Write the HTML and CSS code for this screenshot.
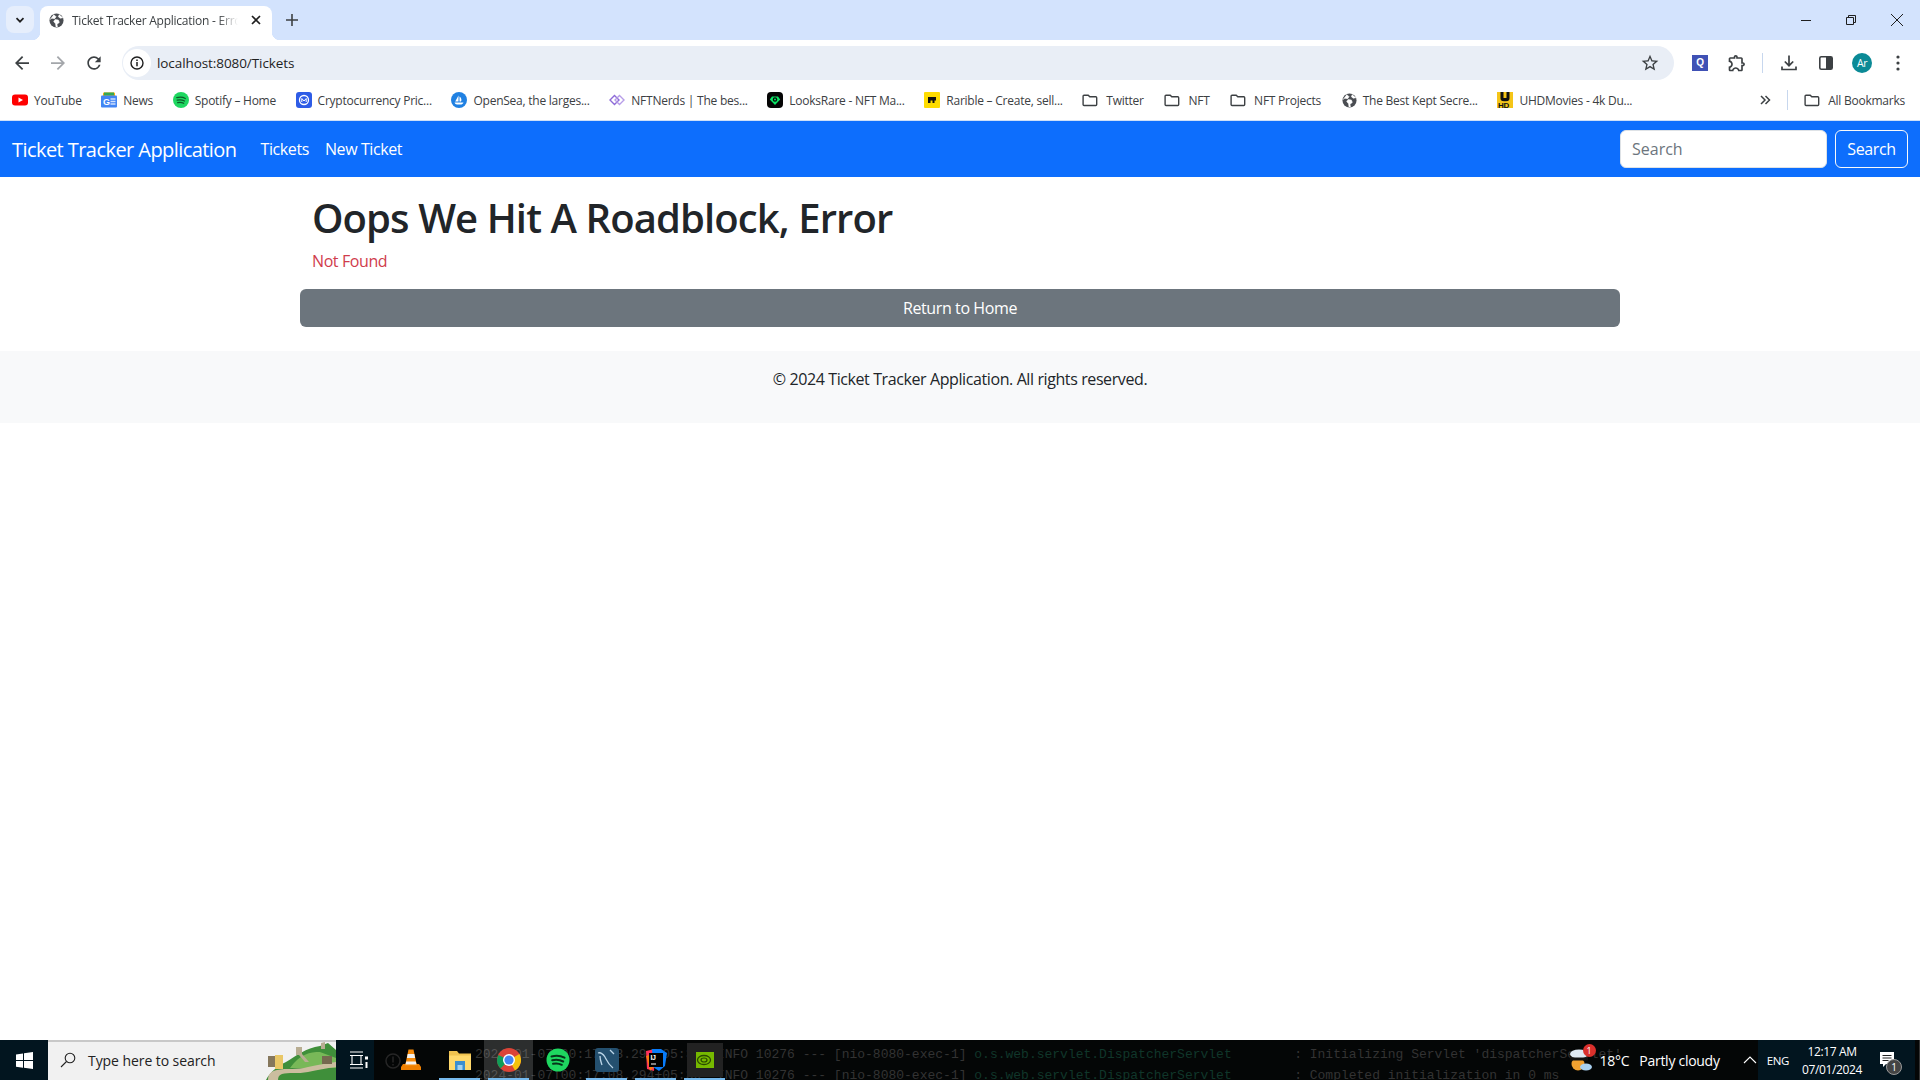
FILE: index.html
```html
<!DOCTYPE html>
<html lang="en">
<head>
    <meta charset="UTF-8">
    <title>Ticket Tracker Application - Error</title>
    <link rel="stylesheet" href="styles.css">
</head>
<body>
    <svg class="defs" width="0" height="0">
        <symbol id="globe" viewBox="0 0 16 16">
            <circle cx="8" cy="8" r="7.5" fill="#4a4d52"/>
            <path d="M5 1.5 7.5 4 6 6 3 5.5 1 7M9 15l-.5-3L11 10l-1-2.5-3.5-.5-1.5 2 2 2.5.5 3.5M11 1.5 10 4l2 1.5 3-.5" fill="#fff" stroke="#fff" stroke-width=".6"/>
        </symbol>
        <symbol id="folder" viewBox="0 0 16 16">
            <path d="M2 3.2h4.2l1.6 1.6h6a.9.9 0 0 1 .9.9v6.9a.9.9 0 0 1-.9.9H2a.9.9 0 0 1-.9-.9V4.1a.9.9 0 0 1 .9-.9z" fill="none" stroke="#3c4043" stroke-width="1.4"/>
        </symbol>
    </svg>

    <div class="tabstrip">
        <div class="tab-search">
            <svg width="12" height="12" viewBox="0 0 12 12"><path d="M2.5 4.2 6 7.7l3.5-3.5" fill="none" stroke="#1f1f1f" stroke-width="1.7"/></svg>
        </div>
        <div class="tab">
            <svg class="tab-icon" width="15" height="15"><use href="#globe"/></svg>
            <span class="tab-title">Ticket Tracker Application - Error</span>
            <svg width="12" height="12" viewBox="0 0 12 12"><path d="M2 2l8 8M10 2l-8 8" stroke="#1f1f1f" stroke-width="1.7"/></svg>
        </div>
        <svg class="new-tab" width="14" height="14" viewBox="0 0 14 14"><path d="M7 1v12M1 7h12" stroke="#3c4043" stroke-width="1.6"/></svg>
        <div class="window-controls">
            <svg width="12" height="12" viewBox="0 0 12 12"><path d="M1 6.5h10" stroke="#1f1f1f"/></svg>
            <svg width="12" height="12" viewBox="0 0 12 12"><path d="M1.5 3.5h7v7h-7zM3.5 3.5v-2h7v7h-2" fill="none" stroke="#1f1f1f"/></svg>
            <svg width="14" height="14" viewBox="0 0 14 14"><path d="M1 1l12 12M13 1 1 13" stroke="#1f1f1f"/></svg>
        </div>
    </div>

    <div class="toolbar">
        <div class="nav-buttons">
            <svg width="14" height="14" viewBox="0 0 16 16"><path d="M16 7H3.83l5.59-5.59L8 0 0 8l8 8 1.41-1.41L3.83 9H16z" fill="#3c4043"/></svg>
            <svg width="14" height="14" viewBox="0 0 16 16"><path d="M0 7h12.17L6.58 1.41 8 0l8 8-8 8-1.41-1.41L12.17 9H0z" fill="#a3a6aa"/></svg>
            <svg class="reload" width="20" height="20" viewBox="0 0 24 24"><path d="M17.65 6.35A7.958 7.958 0 0 0 12 4c-4.42 0-7.99 3.58-7.99 8s3.57 8 7.99 8c3.73 0 6.84-2.55 7.73-6h-2.08A5.99 5.99 0 0 1 12 18c-3.31 0-6-2.69-6-6s2.69-6 6-6c1.66 0 3.14.69 4.22 1.78L13 11h7V4l-2.35 2.35z" fill="#3c4043"/></svg>
        </div>
        <div class="omnibox">
            <span class="site-info">
                <svg width="14" height="14" viewBox="0 0 14 14"><circle cx="7" cy="7" r="6" fill="none" stroke="#1f1f1f" stroke-width="1.4"/><path d="M7 6v4.2M7 3.6v1.4" stroke="#1f1f1f" stroke-width="1.5"/></svg>
            </span>
            <span class="url">localhost:8080/Tickets</span>
            <svg class="star" width="20" height="20" viewBox="0 0 24 24"><path d="M22 9.24l-7.19-.62L12 2 9.19 8.63 2 9.24l5.46 4.73L5.82 21 12 17.27 18.18 21l-1.63-7.03L22 9.24zM12 15.4l-3.76 2.27 1-4.28-3.32-2.88 4.38-.38L12 6.1l1.71 4.04 4.38.38-3.32 2.88 1 4.28L12 15.4z" fill="#3c4043"/></svg>
        </div>
        <div class="toolbar-actions">
            <span class="ext-q">Q</span>
            <svg class="act-puzzle" width="20" height="20" viewBox="0 0 24 24"><path d="M10.5 4.5c.28 0 .5.22.5.5v2h6v6h2c.28 0 .5.22.5.5s-.22.5-.5.5h-2v6h-2.12c-.68-1.75-2.39-3-4.38-3s-3.7 1.25-4.38 3H4v-2.12c1.75-.68 3-2.39 3-4.38 0-1.99-1.24-3.7-2.99-4.38L4 7h6V5c0-.28.22-.5.5-.5m0-2C9.12 2.5 8 3.62 8 5H4c-1.1 0-1.99.9-1.99 2v3.8h.29c1.49 0 2.7 1.21 2.7 2.7s-1.21 2.7-2.7 2.7H2V20c0 1.1.9 2 2 2h3.8v-.3c0-1.49 1.21-2.7 2.7-2.7s2.7 1.21 2.7 2.7v.3H17c1.1 0 2-.9 2-2v-4c1.38 0 2.5-1.12 2.5-2.5S20.38 11 19 11V7c0-1.1-.9-2-2-2h-4c0-1.38-1.12-2.5-2.5-2.5z" fill="#3c4043"/></svg>
            <span class="toolbar-sep"></span>
            <svg class="act-download" width="18" height="18" viewBox="0 0 18 18"><path d="M9 1.5v10M4.8 7.5 9 11.7l4.2-4.2M2 12.5v3h14v-3" fill="none" stroke="#3c4043" stroke-width="1.7"/></svg>
            <svg class="act-panel" width="16" height="16" viewBox="0 0 16 16"><rect x="1.8" y="1.8" width="12.4" height="12.4" rx="1.5" fill="none" stroke="#3c4043" stroke-width="1.6"/><rect x="8" y="2" width="6" height="12" fill="#3c4043"/></svg>
            <span class="avatar">Ar</span>
            <svg class="act-menu" width="4" height="16" viewBox="0 0 4 16"><circle cx="2" cy="2" r="1.6" fill="#3c4043"/><circle cx="2" cy="8" r="1.6" fill="#3c4043"/><circle cx="2" cy="14" r="1.6" fill="#3c4043"/></svg>
        </div>
    </div>

    <div class="bookmarks">
        <a class="bm">
            <svg width="16" height="16" viewBox="0 0 16 16"><rect y="2.5" width="16" height="11" rx="3" fill="#f00"/><path d="M6.5 5.5v5L11 8z" fill="#fff"/></svg>
            YouTube
        </a>
        <a class="bm">
            <svg width="16" height="16" viewBox="0 0 16 16"><rect x="2" y="0.5" width="12" height="5" rx="1" fill="#f9ab00"/><rect x="3" y="0.5" width="10" height="3" fill="#34a853"/><rect y="3.5" width="16" height="12" rx="1" fill="#4285f4"/><path d="M9.5 7h5M9.5 9.5h5M9.5 12h5" stroke="#cfe0fc" stroke-width="1.3"/><text x="2" y="12.5" class="svg-g">G</text></svg>
            News
        </a>
        <a class="bm">
            <svg width="16" height="16" viewBox="0 0 16 16"><circle cx="8" cy="8" r="8" fill="#1ed760"/><path d="M3.8 5.7c3-.8 6-.6 8.5.8M4.2 8.2c2.6-.6 5-.4 7.3.8M4.7 10.6c2.1-.5 4.2-.3 6 .7" fill="none" stroke="#0d5a2a" stroke-width="1.3" stroke-linecap="round"/></svg>
            Spotify – Home
        </a>
        <a class="bm">
            <svg width="16" height="16" viewBox="0 0 16 16"><rect width="16" height="16" rx="3" fill="#2e5ce6"/><circle cx="8" cy="8" r="4.5" fill="none" stroke="#fff" stroke-width="1.3"/><path d="M5.8 10V6.5L8 9l2.2-2.5V10" fill="none" stroke="#fff"/></svg>
            Cryptocurrency Pric...
        </a>
        <a class="bm">
            <svg width="16" height="16" viewBox="0 0 16 16"><circle cx="8" cy="8" r="8" fill="#2081e2"/><path d="M7.5 3.5v6H4.2zM8.5 4.5c1.8 1.2 2.5 3.5 1.5 5H8.5zM3.5 10.5h9c-.6 1.5-1.8 2-2.8 2H6c-1.2 0-2-.8-2.5-2z" fill="#fff"/></svg>
            OpenSea, the larges...
        </a>
        <a class="bm">
            <svg width="16" height="16" viewBox="0 0 16 16"><path d="M1 8l4.5-4.5L10 8l-4.5 4.5z" fill="none" stroke="#8d6bd8" stroke-width="1.4"/><path d="M6 8l4.5-4.5L15 8l-4.5 4.5z" fill="none" stroke="#b79de8" stroke-width="1.4"/></svg>
            NFTNerds | The bes...
        </a>
        <a class="bm">
            <svg width="16" height="16" viewBox="0 0 16 16"><rect width="16" height="16" rx="4" fill="#050505"/><path d="M8 13 2.8 7.5 5 4.5h6l2.2 3z" fill="#0ce466"/><circle cx="8" cy="7.5" r="2.2" fill="#050505"/><circle cx="8" cy="7.5" r="1" fill="#0ce466"/></svg>
            LooksRare - NFT Ma...
        </a>
        <a class="bm">
            <svg width="16" height="16" viewBox="0 0 16 16"><rect width="16" height="16" rx="1" fill="#fedc00"/><path d="M4 5h8v3.5h-1.5V11H8.5V8.5h-2V11H4z" fill="#111"/></svg>
            Rarible – Create, sell...
        </a>
        <a class="bm bm-folder"><svg width="16" height="16"><use href="#folder"/></svg>Twitter</a>
        <a class="bm bm-folder"><svg width="16" height="16"><use href="#folder"/></svg>NFT</a>
        <a class="bm bm-folder"><svg width="16" height="16"><use href="#folder"/></svg>NFT Projects</a>
        <a class="bm"><svg width="15" height="15"><use href="#globe"/></svg>The Best Kept Secre...</a>
        <a class="bm">
            <svg width="16" height="16" viewBox="0 0 16 16"><rect width="16" height="16" fill="#f5c518"/><path d="M3.5 0v6.5a4.5 3 0 0 0 9 0V0h-3v6H6.5V0z" fill="#111"/><rect y="9.5" width="16" height="6.5" fill="#f5c518"/><text x="1" y="15.5" class="svg-hd">HD</text></svg>
            UHDMovies - 4k Du...
        </a>
        <div class="bm-end">
            <svg width="12" height="12" viewBox="0 0 12 12"><path d="M2 2l4 4-4 4M6.5 2l4 4-4 4" fill="none" stroke="#3c4043" stroke-width="1.5"/></svg>
            <span class="toolbar-sep"></span>
            <a class="bm bm-folder"><svg width="16" height="16"><use href="#folder"/></svg>All Bookmarks</a>
        </div>
    </div>

    <nav class="navbar">
        <a class="brand">Ticket Tracker Application</a>
        <a class="nav-link">Tickets</a>
        <a class="nav-link">New Ticket</a>
        <form class="search-form">
            <input class="search-input" type="search" placeholder="Search">
            <button class="search-btn" type="button">Search</button>
        </form>
    </nav>

    <main class="container">
        <div class="error-box">
            <h1>Oops We Hit A Roadblock, Error</h1>
            <p class="error-msg">Not Found</p>
        </div>
        <a class="btn-home">Return to Home</a>
    </main>

    <footer class="footer">
        <p>© 2024 Ticket Tracker Application. All rights reserved.</p>
    </footer>

    <div class="taskbar">
        <!-- console window showing through the transparent taskbar -->
        <div class="console">
            <div class="console-row">2024-01-07T00:17:08.294+05:30  INFO 10276 --- [nio-8080-exec-1] <span class="logger">o.s.web.servlet.DispatcherServlet</span>        : Initializing Servlet 'dispatcherServlet'</div>
            <div class="console-row">2024-01-07T00:17:08.294+05:30  INFO 10276 --- [nio-8080-exec-1] <span class="logger">o.s.web.servlet.DispatcherServlet</span>        : Completed initialization in 0 ms</div>
        </div>
        <svg class="console-alert" width="16" height="16" viewBox="0 0 16 16"><circle cx="8" cy="8" r="7" fill="none" stroke="#262626" stroke-width="1.5"/><path d="M8 3.5v6M8 11v1.5" stroke="#262626" stroke-width="1.5"/></svg>

        <div class="start">
            <svg width="17" height="17" viewBox="0 0 17 17"><path d="M0 2.4 7 1.4v6.7H0zM8 1.3 17 0v8.1H8zM0 9h7v6.7l-7-1zM8 9h9v8l-9-1.3z" fill="#fff"/></svg>
        </div>
        <div class="task-search">
            <svg width="16" height="16" viewBox="0 0 16 16"><circle cx="10" cy="6" r="4.8" fill="none" stroke="#222" stroke-width="1.1"/><path d="M6.5 9.5 1 15" stroke="#222" stroke-width="1.1"/></svg>
            <span class="task-search-text">Type here to search</span>
            <svg class="wall" width="76" height="38" viewBox="0 0 76 38">
                <path d="M6 38C10 30 18 24 26 20 36 14 46 6 60 4l8-3 8 7v30z" fill="#3f8f3a"/>
                <path d="M30 26C40 12 50 10 60 10l16 6v10H44z" fill="#78b858"/>
                <path d="M8 38c0-6 3-9 9-10 10-2 20 0 31-3 10-2 18-4 28-5v5c-10 1-18 3-28 5-10 2-20 0-26 2-3 1-4 3-4 6z" fill="#cbbd9f"/>
                <rect x="8" y="14" width="7" height="11" fill="#85775c"/>
                <rect x="15" y="13" width="8" height="14" fill="#e9c766"/>
                <rect x="62" y="14" width="10" height="8" fill="#75694f"/>
                <path d="M36 5h6v7l7 8h-4l-6-7h-3zM61 1l4-1v7h-4z" fill="#b8ad92"/>
            </svg>
        </div>
        <div class="task-view">
            <svg width="20" height="18" viewBox="0 0 20 18"><path d="M1 1h13M1 17h13M3 4.5h9v9H3zM1 4.5h4M1 13.5h4M10 4.5h4M10 13.5h4" fill="none" stroke="#fff" stroke-width="1.1"/><rect x="16" y="5.5" width="3" height="3" fill="#fff"/><rect x="16.5" y="11" width="2" height="6" fill="#fff"/></svg>
        </div>
        <div class="apps">
            <div class="app">
                <svg width="24" height="24" viewBox="0 0 24 24"><path d="M2 19l2-3h16l2 3v3H2z" fill="#f08000"/><path d="M9.5 1.5h5L18 18H6z" fill="#f58a0b"/><path d="M8.7 6h6.6l.8 4H7.9zM7.2 13.5h9.6l.7 3H6.5z" fill="#f3f3f3"/></svg>
            </div>
            <div class="app app-open">
                <svg width="24" height="24" viewBox="0 0 24 24"><path d="M1 3h8l2 2.5h12V22H1z" fill="#f0c24f"/><path d="M1 7.5h22V22H1z" fill="#ffd86b"/><path d="M7 13h10v9H7z" fill="#3b8ed0"/><path d="M9.5 17h5v5h-5z" fill="#a4d0ee"/></svg>
            </div>
            <div class="app app-open app-active">
                <svg width="24" height="24" viewBox="0 0 24 24"><circle cx="12" cy="12" r="12" fill="#db4437"/><path d="M12 12 1.6 18A12 12 0 0 1 3 4.5z" fill="#0f9d58" transform="rotate(-15 12 12)"/><path d="M12 24A12 12 0 0 0 24 12H12z" fill="#f4c20d" transform="rotate(-30 12 12)"/><circle cx="12" cy="12" r="6" fill="#fff"/><circle cx="12" cy="12" r="4.6" fill="#4285f4"/></svg>
            </div>
            <div class="app">
                <svg width="24" height="24" viewBox="0 0 24 24"><circle cx="12" cy="12" r="11.5" fill="#1ed760"/><path d="M5.5 8.5c4.5-1.2 9-.9 13 1.2M6.2 12.2c3.8-.9 7.5-.6 11 1.3M7 15.8c3-.7 6-.5 8.8 1" fill="none" stroke="#06331a" stroke-width="2" stroke-linecap="round"/></svg>
            </div>
            <div class="app app-open">
                <svg width="24" height="24" viewBox="0 0 24 24"><rect width="24" height="24" rx="3" fill="#24506f"/><path d="M3 5c3-1 5 1 7 4 2 4 3 7 8 11M5 8c0 4 1 6 2 9M15 2l4 4" fill="none" stroke="#bcd6e8" stroke-width="1.3"/></svg>
            </div>
            <div class="app app-open">
                <svg width="24" height="24" viewBox="0 0 24 24"><path d="M2 3l9-2-1 22-7-2z" fill="#fe315d"/><path d="M8 1h9l6 4-2 13-6 5-6-4z" fill="#087cfa"/><path d="M2 8l7-2 2 12-5 5z" fill="#f97a12"/><rect x="5" y="5" width="14" height="14" fill="#000"/><text x="6.5" y="12" class="svg-ij">IJ</text><path d="M7 16h5" stroke="#fff"/></svg>
            </div>
            <div class="app app-open app-nvidia">
                <svg width="20" height="18" viewBox="0 0 20 18"><rect width="20" height="18" fill="#76b900"/><ellipse cx="9" cy="9" rx="6.5" ry="4.5" fill="none" stroke="#2b4a00" stroke-width="1.3"/><ellipse cx="9" cy="9" rx="3" ry="2" fill="none" stroke="#2b4a00" stroke-width="1.2"/></svg>
            </div>
        </div>
        <div class="tray">
            <span class="weather">
                <svg width="26" height="26" viewBox="0 0 26 26"><circle cx="10" cy="17" r="6.5" fill="#f0a030"/><ellipse cx="11" cy="7" rx="9" ry="4.5" fill="#dfe9f3"/><path d="M2 12h18" stroke="#111" stroke-width="3"/><ellipse cx="18" cy="20" rx="6" ry="3.5" fill="#a9d0ef"/></svg>
                <span class="weather-badge">1</span>
            </span>
            <span class="weather-text">18°C</span>
            <span class="weather-text weather-desc">Partly cloudy</span>
            <div class="tray-sys">
                <svg class="tray-caret" width="14" height="8" viewBox="0 0 14 8"><path d="M1 7l6-6 6 6" fill="none" stroke="#fff" stroke-width="1.1"/></svg>
                <span class="tray-lang">ENG</span>
                <span class="clock"><span>12:17 AM</span><span>07/01/2024</span></span>
                <span class="notify">
                    <svg width="18" height="18" viewBox="0 0 18 18"><path d="M2 1h14v12H8l-3 3v-3H2z" fill="#fff"/><path d="M4.5 4.5h9M4.5 7h9M4.5 9.5h6" stroke="#222"/></svg>
                    <span class="notify-badge">1</span>
                </span>
            </div>
        </div>
    </div>
</body>
</html>
```

FILE: styles.css
```css
* { box-sizing: border-box; }
html, body { height: 100%; }
body {
    margin: 0;
    display: flex; flex-direction: column;
    height: 1080px; overflow: hidden;
    background: #fff; color: #212529;
    font-family: "Open Sans", "Noto Sans", sans-serif;
    letter-spacing: -0.025em;
}
a { color: inherit; text-decoration: none; }
svg { display: block; flex: none; }
.defs { position: absolute; }
.svg-g { font: 700 9px "Liberation Sans", sans-serif; fill: #fff; }
.svg-hd { font: 700 8px "Liberation Sans", sans-serif; fill: #111; }
.svg-ij { font: 700 7px "Liberation Sans", sans-serif; fill: #fff; }

/* browser chrome */
.tabstrip {
    height: 40px; flex: none;
    display: flex; align-items: flex-end;
    background: #d3e3fd;
    padding-left: 6px;
}
.tab-search {
    width: 28px; height: 27px; margin: 0 6px 7px 0;
    display: flex; align-items: center; justify-content: center;
    background: #e6eefc; border-radius: 8px;
}
.tab {
    position: relative;
    width: 232px; height: 34px;
    display: flex; align-items: center;
    padding: 0 10px 6px 9px;
    background: #fff; border-radius: 8px 8px 0 0;
    font-size: 12px; letter-spacing: -0.02em; color: #3c4043;
}
.tab::before, .tab::after {
    content: ""; position: absolute; bottom: 0; width: 8px; height: 8px;
}
.tab::before { left: -8px; background: radial-gradient(circle at 0 0, transparent 8px, #fff 8.5px); }
.tab::after { right: -8px; background: radial-gradient(circle at 100% 0, transparent 8px, #fff 8.5px); }
.tab-icon { margin-right: 8px; }
.tab-title {
    width: 166px; margin-right: 12px;
    white-space: nowrap; overflow: hidden;
    -webkit-mask-image: linear-gradient(90deg, #000 88%, transparent);
}
.new-tab { margin: 0 0 13px 13px; }
.window-controls {
    margin-left: auto; height: 40px; padding-right: 16px;
    display: flex; align-items: center; gap: 33px;
}

.toolbar {
    position: relative; z-index: 1;
    height: 44px; flex: none;
    display: flex; align-items: center;
    padding: 2px 0 0 15px;
    background: #fff; border-radius: 8px 8px 0 0;
}
.nav-buttons { display: flex; align-items: center; gap: 22px; width: 107px; }
.reload { margin-left: -3px; }
.omnibox {
    width: 1552px; height: 34px;
    display: flex; align-items: center;
    padding: 0 14px 0 1px;
    background: #e9eef6; border-radius: 17px;
}
.site-info {
    width: 28px; height: 28px; margin-right: 6px;
    display: flex; align-items: center; justify-content: center;
    background: #fff; border-radius: 50%;
}
.url { font-size: 13.5px; letter-spacing: -0.006em; color: #1f1f1f; }
.star { margin-left: auto; }
.toolbar-actions { flex: 1; display: flex; align-items: center; }
.ext-q {
    width: 16px; height: 16px; margin-left: 18px;
    background: #3f51b5; color: #fff;
    font: 700 10px/16px "Liberation Sans", sans-serif; text-align: center;
}
.act-puzzle { margin-left: 19px; }
.toolbar-sep { width: 1px; height: 20px; background: #c7d7ee; flex: none; }
.toolbar-actions .toolbar-sep { margin-left: 15px; }
.act-download { margin-left: 17px; }
.act-panel { margin-left: 20px; }
.avatar {
    width: 20px; height: 20px; margin-left: 18px;
    background: #0b8a96; color: #fff; border-radius: 50%;
    font-size: 10.5px; line-height: 20px; text-align: center;
}
.act-menu { margin-left: 24px; }

.bookmarks {
    height: 37px; flex: none;
    display: flex; align-items: center; gap: 19.6px;
    padding: 0 14px 4px 12px;
    background: #fff; border-bottom: 1px solid #cfe0f8;
    font-size: 12px; letter-spacing: -0.02em; color: #3c4043;
}
.bm { display: flex; align-items: center; gap: 6px; white-space: nowrap; }
.bm-folder { gap: 8px; margin-right: 1px; }
.bm-end { margin-left: auto; display: flex; align-items: center; gap: 16px; }

/* page */
.navbar {
    height: 56px; flex: none;
    display: flex; align-items: center;
    padding: 0 12px;
    background: #0d6efd; color: #fff;
}
.brand { font-size: 20px; letter-spacing: -0.028em; margin-right: 24px; }
.nav-link { font-size: 16px; margin-right: 16px; }
.search-form { margin-left: auto; display: flex; gap: 8px; }
.search-input {
    width: 207px; height: 38px; padding: 6px 11px;
    font: inherit; font-size: 16px; color: #212529;
    background: #fff; border: 1px solid #dee2e6; border-radius: 6px;
}
.search-input::placeholder { color: #6c757d; opacity: 1; }
.search-btn {
    width: 73px; height: 38px; padding: 0;
    font: inherit; font-size: 16px; letter-spacing: inherit; color: #fff;
    background: transparent; border: 1px solid #f8f9fa; border-radius: 6px;
}

.container { width: 1320px; margin: 16px auto 24px; }
.error-box { padding: 0 12px; }
h1 {
    margin: 0 0 7px; padding-top: 1px;
    font-size: 40px; line-height: 48px; font-weight: 600; letter-spacing: -0.0225em;
}
.error-msg { margin: 0 0 16px; font-size: 16px; line-height: 24px; color: #d03c4c; }
.btn-home {
    display: block; height: 38px;
    background: #6c757d; color: #fff; border-radius: 6px;
    font-size: 16px; line-height: 38px; text-align: center;
}
.footer {
    height: 72px; flex: none; padding: 16px;
    background: #f8f9fa; text-align: center;
}
.footer p { margin: 0; font-size: 16px; line-height: 24px; }

/* windows taskbar */
.taskbar {
    position: relative;
    margin-top: auto; height: 40px; flex: none;
    display: flex; align-items: stretch;
    background: #040606; color: #fff;
    overflow: hidden;
}
.console {
    position: absolute; left: 475px; top: 4px;
    font: 13px/21px "Liberation Mono", monospace;
    letter-spacing: 0; color: #333;
}
.console-row { white-space: pre; }
.logger { color: #10362a; }
.console-alert { position: absolute; left: 385px; top: 13px; }
.start, .task-view {
    position: relative;
    display: flex; align-items: center; justify-content: center;
    background: #02151f;
}
.start { width: 48px; }
.task-search {
    position: relative;
    width: 288px; display: flex; align-items: center;
    padding: 0 0 2px 12px;
    background: #f1f1f1; border-top: 2px solid #c8c8c8; color: #1b1b1b;
    overflow: hidden;
}
.task-search-text { margin-left: 12px; font-size: 14px; letter-spacing: -0.005em; color: #222; }
.wall { margin-left: auto; margin-bottom: -2px; }
.task-view { width: 38px; padding-left: 7px; margin-right: 12px; }
.apps { position: relative; display: flex; }
.app {
    position: relative;
    width: 49px; display: flex; align-items: center; justify-content: center;
}
.app-open::after {
    content: ""; position: absolute; left: 4px; right: 4px; bottom: 0; height: 2px;
    background: #76b9ed;
}
.app-active { background: rgba(255, 255, 255, 0.16); }
.app-nvidia svg { outline: 9px solid #222; outline-offset: -1px; }
.tray {
    position: relative;
    margin-left: auto; padding-right: 4px;
    border-right: 1px solid #333;
    display: flex; align-items: center;
    font-size: 14px; letter-spacing: 0;
}
.weather { position: relative; margin-right: 6px; }
.weather-badge {
    position: absolute; top: -3px; right: -2px;
    width: 13px; height: 13px; border-radius: 50%;
    background: #d9302c; font-size: 9px; line-height: 13px; text-align: center;
}
.weather-text { font-size: 14px; letter-spacing: -0.02em; }
.weather-desc { margin-left: 10px; }
.tray-sys {
    align-self: stretch; margin-left: 38px;
    display: flex; align-items: center;
    background: #02151f;
}
.tray-caret { margin-left: -15px; }
.tray-lang { margin-left: 10px; font-size: 11.5px; letter-spacing: -0.03em; }
.clock {
    width: 86px;
    display: flex; flex-direction: column; align-items: center; gap: 1px;
    font-size: 12px; letter-spacing: -0.03em; line-height: 17px;
}
.notify { position: relative; margin-left: 3px; margin-right: 19px; }
.notify-badge {
    position: absolute; left: 8px; top: 8px;
    width: 16px; height: 16px; border-radius: 50%;
    background: #444; border: 1px solid #999;
    font-size: 10px; line-height: 14px; text-align: center;
}
```
